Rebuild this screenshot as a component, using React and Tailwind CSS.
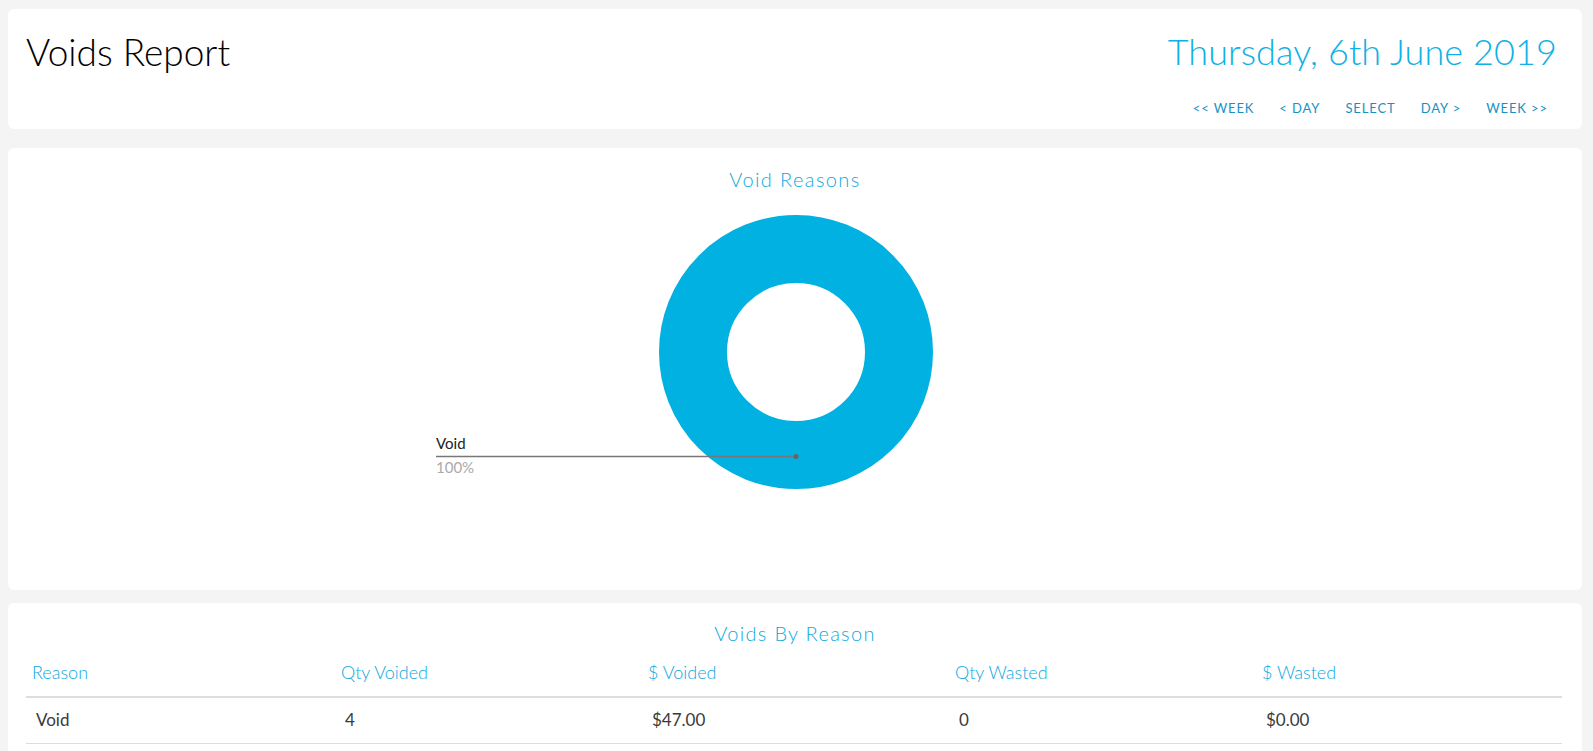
const font = { fontFamily: "Lato, 'Open Sans', sans-serif" };

const navLinks = ["<< WEEK", "< DAY", "SELECT", "DAY >", "WEEK >>"];
const columns = ["Reason", "Qty Voided", "$ Voided", "Qty Wasted", "$ Wasted"];
const row = ["Void", "4", "$47.00", "0", "$0.00"];

function VoidChart() {
    return (
        <svg width="1574" height="310" viewBox="0 0 1574 310" className="block">
            <circle cx="788" cy="146" r="103" fill="none" stroke="#00b1e1" strokeWidth="68" />
            <line x1="428" y1="250.5" x2="788" y2="250.5" stroke="#777777" strokeWidth="1.5" />
            <circle cx="788" cy="250.5" r="2.5" fill="#666666" />
            <text x="428" y="243" fontSize="15" fill="#222222">Void</text>
            <text x="428" y="267" fontSize="15" fill="#aaaaaa">100%</text>
        </svg>
    );
}

export default function App() {
    return (
        <div className="min-h-[751px] bg-[#f4f4f4] px-2 pt-[9px] overflow-hidden" style={font}>
            <div className="bg-white rounded-md h-[120px] mr-[3px] pl-[18px] pr-[9px] flex justify-between">
                <h1 className="text-[37px] font-light text-black mt-[19px] leading-[48px]">Voids Report</h1>
                <div className="flex flex-col items-end">
                    <div className="text-[36px] font-light tracking-[0.1px] text-[#0eb0e5] mt-[18px] mr-[16px] leading-[48px]">Thursday, 6th June 2019</div>
                    <div className="flex gap-[25px] mt-[24px] mr-[25px] text-[13px] tracking-[0.9px] text-[#1592c2]">
                        {navLinks.map((link) => (
                            <a key={link}>{link}</a>
                        ))}
                    </div>
                </div>
            </div>

            <div className="bg-white rounded-md h-[442px] mt-[19px] mr-[3px]">
                <h2 className="text-center text-[20px] font-light tracking-[1.4px] text-[#0ba9e0] pt-[19px] leading-6">Void Reasons</h2>
                <div className="mt-[15px]">
                    <VoidChart />
                </div>
            </div>

            <div className="bg-white rounded-md mt-[13px] mr-[3px] px-[18px] pb-4">
                <h2 className="text-center text-[20px] font-light tracking-[1.3px] text-[#0ba9e0] pt-[18px] leading-6">Voids By Reason</h2>
                <div className="grid grid-cols-[309px_repeat(4,307px)] mt-[7px] mr-[2px] border-b-2 border-[#dddddd] h-[46px] pl-[6px] text-[18px] font-light text-[#0ba9e0] items-center">
                    {columns.map((col) => (
                        <div key={col} className="-mt-[3px]">{col}</div>
                    ))}
                </div>
                <div className="grid grid-cols-[309px_repeat(4,307px)] mr-[2px] border-b border-[#dddddd] h-[46px] pl-[10px] text-[17px] text-[#3a3a3a] items-center">
                    {row.map((cell, i) => (
                        <div key={i} className="-mt-[2px]">{cell}</div>
                    ))}
                </div>
            </div>
        </div>
    );
}
